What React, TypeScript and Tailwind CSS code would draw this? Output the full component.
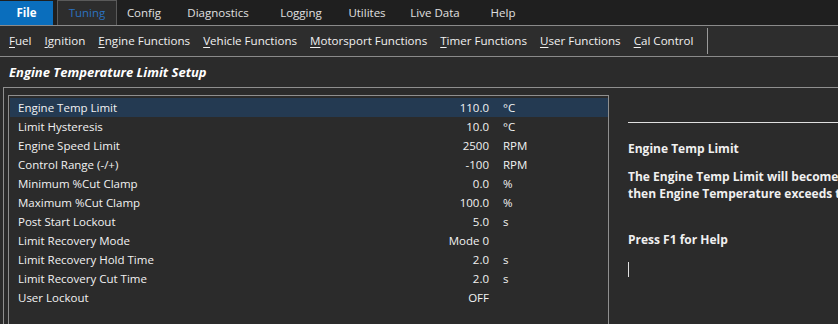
import React from 'react';

const tabs = [
  { label: 'File', w: 'w-[53px]' },
  { label: 'Tuning', w: 'w-[60px]' },
  { label: 'Config', w: 'w-[54px]' },
  { label: 'Diagnostics', w: 'w-[94px]' },
  { label: 'Logging', w: 'w-[72px]' },
  { label: 'Utilites', w: 'w-[60px]' },
  { label: 'Live Data', w: 'w-[76px]' },
  { label: 'Help', w: 'w-[60px]' },
];

const menus = [
  ['F', 'uel'],
  ['I', 'gnition'],
  ['E', 'ngine Functions'],
  ['V', 'ehicle Functions'],
  ['M', 'otorsport Functions'],
  ['T', 'imer Functions'],
  ['U', 'ser Functions'],
  ['C', 'al Control'],
];

const rows = [
  { name: 'Engine Temp Limit', value: '110.0', unit: '°C' },
  { name: 'Limit Hysteresis', value: '10.0', unit: '°C' },
  { name: 'Engine Speed Limit', value: '2500', unit: 'RPM' },
  { name: 'Control Range (-/+)', value: '-100', unit: 'RPM' },
  { name: 'Minimum %Cut Clamp', value: '0.0', unit: '%' },
  { name: 'Maximum %Cut Clamp', value: '100.0', unit: '%' },
  { name: 'Post Start Lockout', value: '5.0', unit: 's' },
  { name: 'Limit Recovery Mode', value: 'Mode 0', unit: '' },
  { name: 'Limit Recovery Hold Time', value: '2.0', unit: 's' },
  { name: 'Limit Recovery Cut Time', value: '2.0', unit: 's' },
  { name: 'User Lockout', value: 'OFF', unit: '' },
];

export default function App() {
  return (
    <div
      className="w-[838px] h-[324px] overflow-hidden bg-[#2b2b2b] text-white text-[11.5px] flex flex-col"
      style={{ fontFamily: '"Open Sans", "Noto Sans", sans-serif' }}
    >
      {/* Ribbon tabs */}
      <div className="h-[26px] bg-[#1f1f1f] flex items-end border-b border-[#8a8a8a] shrink-0">
        {tabs.map((t, i) => (
          <div
            key={t.label}
            className={
              t.w +
              ' h-[24px] flex items-center justify-center ' +
              (i === 0
                ? 'bg-[#0a6ebd] font-bold text-white mr-[4px]'
                : i === 1
                ? 'bg-[#2d2d2d] text-[#2b72c0] border-t border-l border-r border-[#5a5a5a] h-[25px]'
                : 'text-[#e0e0e0]')
            }
          >
            {t.label}
          </div>
        ))}
      </div>

      {/* Function menu */}
      <div className="h-[31px] bg-[#2d2d2d] flex items-center pl-[9px] border-b border-[#8a8a8a] shrink-0">
        {menus.map(([k, rest], i) => (
          <span key={i} className="text-[#f0f0f0] mr-[13px] text-[11.6px]">
            <span className="underline underline-offset-2">{k}</span>
            {rest}
          </span>
        ))}
        <div className="w-px h-[26px] bg-[#9a9a9a]" />
      </div>

      {/* Title */}
      <div className="h-[30px] flex items-center pl-[9px] pt-[2px] shrink-0">
        <span className="font-bold italic text-[13px] text-white">Engine Temperature Limit Setup</span>
      </div>

      {/* Body */}
      <div className="flex-1 ml-[3px] border-t border-l border-[#8f8f8f] pt-[7px] pl-[4px] flex overflow-hidden">
        <div className="w-[601px] h-[240px] border-t border-l border-r border-[#8f8f8f] pt-[2px] pl-[1px] shrink-0">
          {rows.map((r, i) => (
            <div
              key={r.name}
              className={'h-[19px] flex items-center ' + (i === 0 ? 'bg-[#243a52]' : '')}
            >
              <span className="pl-[8px] w-[400px] text-[#f2f2f2]">{r.name}</span>
              <span className="w-[79px] text-right text-[#f2f2f2]">{r.value}</span>
              <span className="pl-[14px] text-[#f2f2f2]">{r.unit}</span>
            </div>
          ))}
        </div>
        <div className="flex-1 min-w-0 pl-[19px] pt-[27px] text-[12px]">
          <div className="h-px bg-[#e0e0e0] w-full" />
          <div className="font-bold mt-[17px] text-[#f0f0f0]">Engine Temp Limit</div>
          <div className="font-bold mt-[10px] leading-[17px] text-[#f0f0f0] whitespace-nowrap">
            The Engine Temp Limit will become active when
            <br />
            then Engine Temperature exceeds this value.
          </div>
          <div className="font-bold mt-[29px] text-[#f0f0f0]">Press F1 for Help</div>
          <div className="w-px h-[15px] bg-[#e0e0e0] mt-[13px]" />
        </div>
      </div>
    </div>
  );
}
